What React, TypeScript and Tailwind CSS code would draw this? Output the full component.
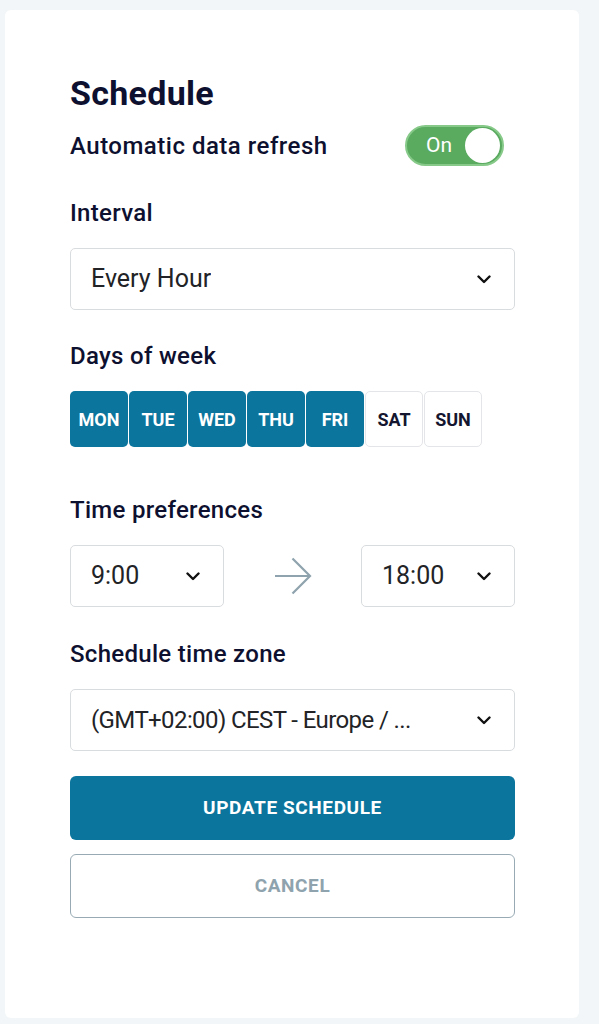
import { useState } from 'react';

const DAYS = ['MON', 'TUE', 'WED', 'THU', 'FRI', 'SAT', 'SUN'];

function Chevron() {
  return (
    <svg width="14" height="9" viewBox="0 0 14 9" fill="none" aria-hidden="true">
      <path d="M1.5 1.5 7 7l5.5-5.5" stroke="#111" strokeWidth="2.4" strokeLinecap="round" strokeLinejoin="round" />
    </svg>
  );
}

function SelectBox({
  value,
  className = '',
  textClass = 'text-[25px]',
}: {
  value: string;
  className?: string;
  textClass?: string;
}) {
  return (
    <div
      className={`flex h-[62px] items-center justify-between rounded-[5px] border border-[#d9dcdf] bg-white pl-[20px] pr-[23px] ${className}`}
    >
      <span className={`truncate text-[#222326] ${textClass}`}>{value}</span>
      <Chevron />
    </div>
  );
}

export default function App() {
  const [on, setOn] = useState(true);
  const [days, setDays] = useState<string[]>(['MON', 'TUE', 'WED', 'THU', 'FRI']);

  const toggleDay = (d: string) =>
    setDays((cur) => (cur.includes(d) ? cur.filter((x) => x !== d) : [...cur, d]));

  return (
    <div className="min-h-[1024px] bg-[#f2f6f8] pl-[5px] pr-[20px] pt-[10px] font-['Roboto',sans-serif]">
      <div className="h-[1008px] rounded-[6px] bg-white pl-[65px] pr-[64px] pt-[63px]">
        <h1 className="text-[34px] font-bold leading-[40px] tracking-[0.3px] text-[#0e1030]">Schedule</h1>

        <div className="mt-[12px] flex h-[41px] items-center justify-between pr-[11px]">
          <span className="text-[24px] font-medium tracking-[0.5px] text-[#0e1030]">Automatic data refresh</span>
          <button
            type="button"
            onClick={() => setOn(!on)}
            className="flex h-[41px] w-[99px] items-center justify-between rounded-full border-2 border-[#86c988] bg-[#5aaa60] pl-[19px] pr-[2px]"
          >
            <span className="text-[21px] text-white">{on ? 'On' : 'Off'}</span>
            <span className="size-[35px] rounded-full bg-white" />
          </button>
        </div>

        <p className="mt-[33px] text-[24px] font-medium leading-[28px] tracking-[0.3px] text-[#0e1030]">Interval</p>
        <SelectBox value="Every Hour" className="mt-[21px]" />

        <p className="mt-[32px] text-[24px] font-medium leading-[28px] tracking-[0.3px] text-[#0e1030]">Days of week</p>
        <div className="mt-[21px] flex gap-[1px]">
          {DAYS.map((d) => {
            const active = days.includes(d);
            return (
              <button
                key={d}
                type="button"
                onClick={() => toggleDay(d)}
                className={
                  active
                    ? 'h-[56px] w-[58px] rounded-[5px] bg-[#0b759d] text-[18px] font-bold text-white'
                    : 'h-[56px] w-[58px] rounded-[5px] border border-[#e3e5e8] bg-white text-[18px] font-bold text-[#14162f]'
                }
              >
                {d}
              </button>
            );
          })}
        </div>

        <p className="mt-[49px] text-[24px] font-medium leading-[28px] tracking-[0.3px] text-[#0e1030]">Time preferences</p>
        <div className="mt-[21px] flex items-center justify-between">
          <SelectBox value="9:00" className="w-[154px]" />
          <svg width="38" height="38" viewBox="0 0 38 38" fill="none" aria-hidden="true" className="ml-[2px] mr-[2px]">
            <path d="M1 19h35M18.5 1.5 36 19 18.5 36.5" stroke="#8ea3ad" strokeWidth="2.2" />
          </svg>
          <SelectBox value="18:00" className="w-[154px]" />
        </div>

        <p className="mt-[33px] text-[24px] font-medium leading-[28px] tracking-[0.3px] text-[#0e1030]">Schedule time zone</p>
        <SelectBox
          value="(GMT+02:00) CEST - Europe / ..."
          className="mt-[21px] pl-[18px]"
          textClass="text-[24px] tracking-[-0.6px]"
        />

        <button
          type="button"
          className="mt-[25px] flex h-[64px] w-full items-center justify-center rounded-[6px] bg-[#0b759d] text-[19px] font-bold tracking-[0.6px] text-white"
        >
          UPDATE SCHEDULE
        </button>
        <button
          type="button"
          className="mt-[14px] flex h-[64px] w-full items-center justify-center rounded-[6px] border border-[#98abb5] bg-white text-[19px] font-bold tracking-[0.6px] text-[#8ea3ad]"
        >
          CANCEL
        </button>
      </div>
    </div>
  );
}
